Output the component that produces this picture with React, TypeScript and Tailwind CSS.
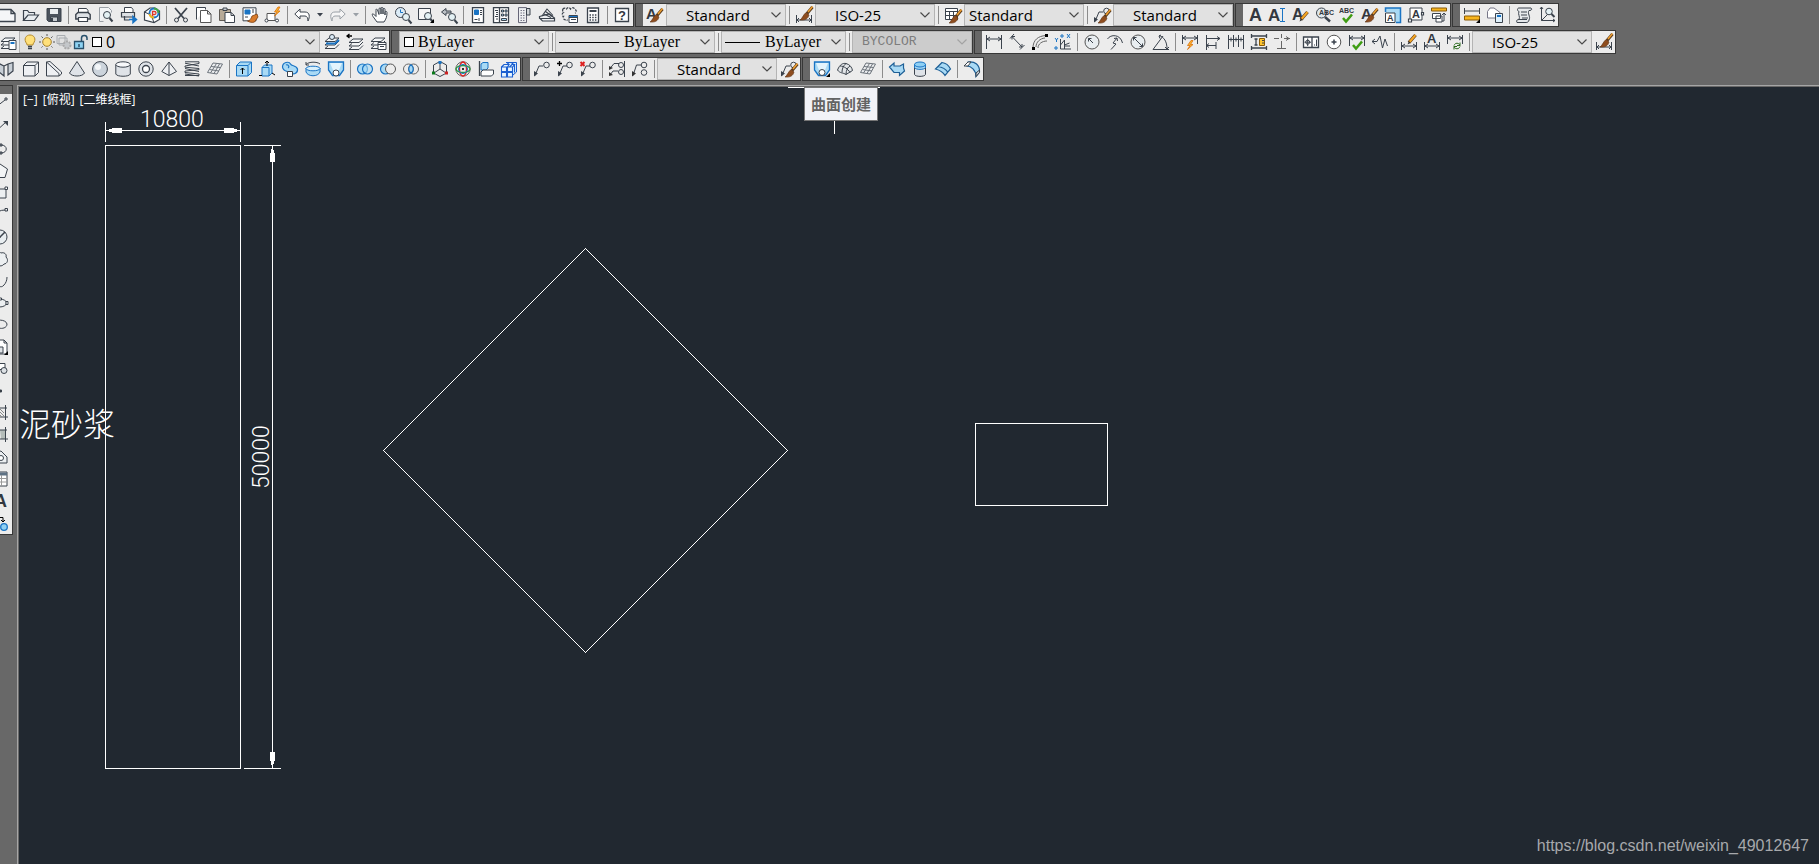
// App.tsx
// ─────────────────────────────────────────────
// CAD drawing window: docked toolbars on top,
// draw palette on the left, model space below.
// A toolbar is a string of icon names, "|" is a
// separator. Icons live in ICONS (16x16 grid).
// ─────────────────────────────────────────────

import type { ReactNode } from 'react';

const BLUE = '#1a74c4';
const SKY = '#a9daf5';
const GREY = '#9aa0a6';

/* ── Shared icon parts ─────────────────────── */

const Brush = () => (
  <>
    <path d="M15.5 2 10 8.5" stroke="#5a3a1c" strokeWidth="3" />
    <path d="M15.5 1.5 11 7" stroke="#f0a030" strokeWidth="1.5" />
    <path d="M9 7.5l3 2.5c-1 4-4 5.5-9 5 2-1 3-5 6-7.5z" fill="#8f4d1e" stroke="#5b3012" strokeWidth=".6" />
  </>
);

const Pencil = () => (
  <>
    <path d="M14.5 5 8 12.5" stroke="#5a3a1c" strokeWidth="3.4" />
    <path d="M14.5 5 8.5 12" stroke="#f5a623" strokeWidth="2" />
    <path d="M8 11 6.5 14.5 9.5 13z" fill="#333" stroke="none" />
  </>
);

const Letter = ({ x = 0, y = 13, size = 15, children = 'A' }: { x?: number; y?: number; size?: number; children?: string }) => (
  <text x={x} y={y} fontSize={size} fontWeight="700" fontFamily="Liberation Sans, sans-serif" fill="#33383f" stroke="none">
    {children}
  </text>
);

const Bolt = ({ t = '' }: { t?: string }) => (
  <path d="M13 0 9.5 5h2.5L9.5 9 15 4h-2.5L15 0z" fill="#ffb52e" stroke="#d9710c" strokeWidth=".8" transform={t} />
);

const Glass = ({ x = 10, y = 9 }: { x?: number; y?: number }) => (
  <>
    <path d={`M${x + 2.5} ${y + 3}l3 3.5`} stroke="#3b434d" strokeWidth="2" />
    <circle cx={x} cy={y} r="3.5" fill="#e4f1f4" />
  </>
);

// dimension line with end ticks, reused by most of the dimension icons
const Dim = ({ y = 5, top = 1, bottom = 15 }: { y?: number; top?: number; bottom?: number }) => (
  <path d={`M.5 ${top}V${bottom}M15.5 ${top}V${bottom}M1 ${y}H15M4 ${y - 2}L1 ${y}l3 2M12 ${y - 2}L15 ${y}l-3 2`} />
);

const Leader = ({ x = 0 }: { x?: number }) => (
  <>
    <path d={`M${1 + x} 14.5 ${5 + x} 5h4`} />
    <path d={`M${x} 10v5.5l4-3z`} fill="#3b434d" stroke="none" />
    <circle cx="12.5" cy="4" r="2.8" />
  </>
);

const Layers = () => (
  <path d="M5 4h10l-4 3.5H1zM4 8.5 1 11h10l4-4M4 12l-3 2.5h10l4-4" fill="#f3f5f6" />
);

const ICONS: Record<string, ReactNode> = {
  /* standard */
  'new': <path d="M-2 2.5H11l4 4V14.5H-2M11 2.5v4h4" fill="#f5f6f8" strokeWidth="1.3" />,
  'open': <path d="M.5 13.5V3.5h4l1.5 2h5.5v2.5M.5 13.5 5 8h10.5l-4 5.5z" fill="#e8ecef" strokeWidth="1.2" />,
  'save': (
    <>
      <path d="M1 1.5h14v13H2.5L1 13z" fill="#4b535d" />
      <path d="M4 2h8v5H4z" fill="#e9edf0" stroke="none" />
      <path d="M4.5 10h7v4.5h-7z" fill="#c9ced3" />
      <path d="M6 11v3" strokeWidth="2" />
    </>
  ),
  'print': (
    <>
      <path d="M3.5 7V1.5h8l1.5 2V7" fill="#fff" />
      <path d="M.8 7.5 3 5.5h10l2.2 2V12H.8z" fill="#dde1e5" strokeWidth="1.4" />
      <path d="M3.5 10.5h9v4h-9z" fill="#fff" strokeWidth="1.2" />
    </>
  ),
  'preview': (
    <>
      <path d="M1.5 14.5V.5h9l3 3v2M1.5 14.5h4" fill="#f2f4f6" stroke={GREY} />
      <Glass x={9} y={8} />
    </>
  ),
  'publish': (
    <>
      <path d="M3.5 5V.5h7l1.5 2V5" fill="#fff" />
      <path d="M.5 5.5h13V10H.5zM3.5 9v4h5" fill="#dde1e5" strokeWidth="1.2" />
      <path d="M8 12.5h4.5M12 9.5l3.5 3-3.5 3z" stroke={BLUE} fill={BLUE} strokeWidth="1.5" />
    </>
  ),
  'print-3d': (
    <>
      <path d="M.5 5 6 1h5l4.5 3v8.500L10 15.500.5 13z" fill="#fff" strokeWidth="1.2" />
      <path d="M.5 5 7 8l3 7.500" />
      <circle cx="10" cy="6" r="4.5" stroke={BLUE} strokeWidth="1.8" fill="#e9f6ff" />
      <path d="M10 1.5a4.500 4.500 0 0 1 4.5 4.5" stroke="#46a546" strokeWidth="2" />
      <path d="M8.5 9V4.5h2a1.500 1.500 0 0 1 0 3H9" stroke="#e0392b" strokeWidth="1.3" />
      <path d="M5.500 7a4.500 4.500 0 0 0 4.500 3.500" stroke="#f1b21c" strokeWidth="2" />
    </>
  ),
  'cut': (
    <>
      <path d="M2 1 11 11.5M14 1 5 11.5" strokeWidth="1.8" />
      <circle cx="3.5" cy="13" r="2" />
      <circle cx="12.5" cy="13" r="2" />
    </>
  ),
  'copy': (
    <>
      <path d="M.5 12.5V.5h9v2" fill="#fff" />
      <path d="M4.5 3.5h7l3.5 3.5v8.5H4.5zM11.5 3.5V7H15" fill="#fff" stroke="#555" />
    </>
  ),
  'paste': (
    <>
      <path d="M.5 2.5h11v11H.5z" fill="#b8ab98" stroke="#5f5a54" />
      <path d="M4 1h4v2.5H4z" fill="#c9ced3" />
      <path d="M6 5.500h6l3.5 3v7H6zM12 5.5v3h3" fill="#fff" />
    </>
  ),
  'match-properties': (
    <>
      <path d="M1 .8h13v13H1z" fill="#fff" />
      <path d="M3 3h5v4H3z" fill={BLUE} stroke={BLUE} />
      <path d="M10 3h2M10 5h2M3 10h3" />
      <path d="M10 9 15 7l1 3-3.5 5c-2 .8-5 .3-7-1 2 0 3.500-2 4.500-5z" fill="#d77a2a" stroke="#7b3f12" strokeWidth=".8" />
    </>
  ),
  'block-editor': (
    <>
      <path d="M2 6.5h8v7H2z" fill="#fff" stroke="#555" />
      <circle cx="1.5" cy="13.5" r="1.5" fill="#fff" />
      <circle cx="12" cy="13.5" r="1.5" fill="#fff" />
      <Bolt />
    </>
  ),
  'undo': <path d="M.8 7 6 2v3h5c5 0 5 5 3 9 0-3-1-5-3-5H6v3z" fill="#fff" />,
  'redo': <path d="M15.2 7 10 2v3H5C0 5 0 10 2 14c0-3 1-5 3-5h5v3z" fill="#f6f6f6" stroke={GREY} />,
  'pan': (
    <path
      d="M4 9.5 1.5 7C0 6 0 8 1 9.5L5 15h7c2-3 3-5 3-9.5 0-1.5-2-1.5-2 0V8 2.5c0-1.5-2-1.5-2 0V7 1.5c0-1.5-2-1.5-2 0V7 2c0-1.500-2-1.500-2 0v5.5L5.5 3c-.5-1.5-2-1-1.5.5z"
      fill="#fff"
    />
  ),
  'zoom-realtime': (
    <>
      <circle cx="5.5" cy="5.5" r="5" fill="#dcecf7" />
      <path d="M5.5 2.5v3H8" stroke={BLUE} />
      <Glass x={11} y={10} />
    </>
  ),
  'zoom-window': (
    <>
      <path d="M.5 1.5h12v11H.5z" fill="#f6f6f6" />
      <Glass x={10} y={9} />
      <path d="M16 12v4h-4z" fill="#000" stroke="none" />
    </>
  ),
  'zoom-previous': (
    <>
      <path d="M.5 5 5 1.5V4h5v2H5v2.5z" fill="#bcc1c6" />
      <Glass x={11} y={10} />
    </>
  ),
  'properties': (
    <>
      <path d="M2.500.6h11v15h-11z" fill="#fff" strokeWidth="1.3" />
      <path d="M4.500 3h4v4.500h-4z" fill={BLUE} stroke={BLUE} />
      <path d="M10 3.5h2M10 5.5h2M10 7.5h2M4.500 12.5h3M9 14v-3" />
    </>
  ),
  'design-center': (
    <>
      <path d="M.5.6h15v15H.5zM6.5 1v14" fill="#fff" strokeWidth="1.3" />
      <path d="M2 3.5h3M3 5.5h2M3 7.5h2M2 9.5h3M3 12h2" />
      <path d="M8.5 3h2v2h-2zM12 3h2v2h-2zM8.5 7h2v2h-2zM12 7h2v2h-2zM8.5 11.5h5v2h-5z" fill={SKY} />
    </>
  ),
  'tool-palettes': (
    <>
      <path d="M2.5.6h8v15h-8z" fill="#eceef0" stroke="#667" />
      <path d="M10.5 1.5h3.5V8h-3.5z" fill="#d0d4d8" />
      <path d="M4.5 3.5h4M4.5 6h4M4.5 8.5h4M4.5 11h4M4.5 13.5h4" strokeDasharray="1.5 1" strokeWidth="1.2" stroke="#778" />
    </>
  ),
  'sheet-set': (
    <>
      <path d="M.5 9.500 10 7l5.500 4v3H3.500L.5 11z" fill="#eceef0" strokeWidth="1.2" />
      <path d="M3 9 8 2l6 6.500M5 7l7 3.500M.5 11.500h15M6.500 4.500l7 5" strokeWidth="1.1" />
    </>
  ),
  'markup': (
    <>
      <path d="M1 2c1.5-2 3 0 3.5 0 1-2 3-2 4 0 1.5-2 4-1.5 4 .5 2 0 2.5 3 .5 3.5M1 2c-1 1 0 3 .5 3.5-2 1-1.5 4 0 4-1 2 1 4 3 3l1 1" strokeDasharray="2.5 1.2" strokeWidth="1.3" />
      <path d="M7 8.5h8.5v7H7zM7 10.5h8.5M9 12.5h5" fill="#fff" />
      <path d="M7 9.5h8.5" stroke={BLUE} />
    </>
  ),
  'calculator': (
    <>
      <path d="M2.5 1h11v14.5h-11z" fill="#fff" strokeWidth="1.3" />
      <path d="M4.5 4h7" strokeWidth="2" />
      <path d="M4.5 8h7M4.5 10.5h7M4.5 13h7" strokeDasharray="1.5 1.2" strokeWidth="1.5" />
    </>
  ),
  'help': (
    <>
      <path d="M1.5 1.5h13v13h-13z" fill="#fff" strokeWidth="1.3" />
      <Letter x={4} y={13} size={13}>?</Letter>
    </>
  ),

  /* styles */
  'text-style': <><Letter x={-1} y={12} size={15} /><Brush /></>,
  'dim-style': <><path d="M.5 8v8M15.5 8v8M1 13h14M3 11l-2 2 2 2M13 11l2 2-2 2" /><g transform="translate(1 -2)"><Brush /></g></>,
  'table-style': <><path d="M.5 1.500h12v11H.5zM.5 4.5h12M.5 8.5h12M4.5 4v8M8.5 4v8" fill="#fff" /><g transform="translate(1 1)"><Brush /></g></>,
  'mleader-style': <><Leader /><g transform="translate(1 1)"><Brush /></g></>,

  /* text */
  'mtext': <Letter x={2} y={14} size={18} />,
  'single-text': <><Letter x={-2} y={14} size={17} /><path d="M10 1.500h5M10 14.500h5M12.5 1.500v13" stroke={BLUE} /></>,
  'edit-text': <><Letter x={-1} y={13} size={16} /><Pencil /></>,
  'find-text': (
    <>
      <path d="m9 10 5 4.5" strokeWidth="2.5" />
      <circle cx="5.5" cy="6" r="5" fill="#dfe7ea" />
      <Letter x={3} y={8} size={7}>ABC</Letter>
    </>
  ),
  'spell-check': <><Letter x={0} y={6} size={7}>ABC</Letter><path d="m4 11 3 3.5 6-7" stroke="#3f9d13" strokeWidth="2.5" /></>,
  'scale-text': (
    <>
      <path d="M.5 5V1h15v14.5H11" fill={SKY} stroke={BLUE} strokeWidth="1.5" />
      <path d="M.5 6h9.5v9.5H.5z" fill="#fff" />
      <Letter x={2} y={14} size={9} />
    </>
  ),
  'justify-text': (
    <>
      <path d="M2 1h12v12H2z" fill="#fff" />
      <Letter x={4} y={11} size={11} />
      <path d="M.5 12h3v3h-3zM13.500 5.500h2v2.500h-2z" fill="#fff" strokeWidth="1.2" />
    </>
  ),
  'convert-space': (
    <>
      <path d="M.5 1h15v3H.5z" fill="#f7b51e" stroke="#8a5a06" />
      <path d="M1.5 6.5h8v5h-8zM5 9h6v6H5zM13 6v8h-2M13 6l-2 2M13 6l2 2" fill="#fff" />
    </>
  ),

  /* measure */
  'distance': (
    <>
      <path d="M.5 1v6M15.5 1v6M1 4h14" />
      <path d="M.5 9h15v4H.5z" fill="#f7b51e" stroke="#8a5a06" />
      <path d="M16 12v4h-4z" fill="#000" stroke="none" />
    </>
  ),
  'mass-properties': (
    <>
      <path d="M.5 4.5 3 1h4l6 4.500v5.500H.5z" fill="#fff" stroke="#778" />
      <path d="M8.500 6.5h7v9h-7z" fill="#dff0fb" />
      <path d="M10 9h4" stroke={BLUE} strokeWidth="2" />
    </>
  ),
  'list': <path d="M3 1h12c1 1 1 2-1 2.5h-1c-2 3 2 6 0 9.5 0 2-2 2.5-3 2.5H1c-1-2 0-3 2-3 1.5-3-1.5-5 0-8C1 4 1 1 3 1zM5 5h6M5 8h6M6 11h6M3 12.5h8" fill="#e6e9ec" />,
  'locate-point': <><path d="M2.5 0v13.5H16M1 2l1.500-2L4 2M14 12l2 1.500-2 1.500M2.5 13.5 9 7" /><circle cx="10" cy="4.500" r="3.3" fill="#e4f1f4" /><path d="m12.500 7 3 3" strokeWidth="2" /></>,

  /* layers */
  'layer-properties': <><Layers /><path d="M9 6.5h7v9H9z" fill="#fff" /><path d="M10.5 9h4" stroke={BLUE} strokeWidth="2" /></>,
  'make-current': <><Layers /><circle cx="8" cy="3" r="2.5" fill="#dcecf7" /><path d="M2 9.500h9l4-3.500" stroke={BLUE} strokeWidth="2" /></>,
  'layer-previous': <><g transform="translate(1 1)"><Layers /></g><path d="M5 2H0M2.5 0 0 2l2.5 2" stroke="#000" strokeWidth="1.3" /></>,
  'layer-states': <><Layers /><path d="M8 8.5h8v7H8zM8 10.5h8M10 12.5h4" fill="#fff" /></>,
  'bulb': <><path d="M5 10C1 5 4 1 8 1s7 4 3 9v1H5z" fill="#ffe07a" stroke="#b58a2a" /><path d="M6 12.5h4M6 14.5h4" strokeWidth="1.5" /></>,
  'sun': <><path d="M8 0v16M0 8h16M2.5 2.5l11 11M13.5 2.5l-11 11" stroke="#555" strokeDasharray="2 12" /><circle cx="8" cy="8" r="4.3" fill="#ffe07a" stroke="#a8822a" /></>,
  'viewport-freeze': <><path d="M1 1.500h8v8H1zM3 4h8v7H3z" stroke="#a8acb0" /><circle cx="11" cy="11" r="3.5" fill="#c4c7ca" stroke="#aaa" strokeDasharray="2 1" strokeWidth="2" /></>,
  'lock': <><path d="M1.5 7.5h9v7h-9z" fill="#8dd2f2" stroke="#28506b" strokeWidth="1.3" /><path d="M8.5 7V4c0-3.5 5.5-3.500 5.500 0v2M6 10v3" stroke="#28506b" strokeWidth="1.5" /></>,

  /* dimensions */
  'linear': <Dim y={5} />,
  'aligned': <path d="M1 4.5 5 0M11 15.5l4.5-4.5M3 2.5 13 13M3 5.5v-3h3M13 10v3h-3" />,
  'arc-length': (
    <>
      <path d="M1 14C1 6 6 2 14 1.500M6 14c0-4 4-7 9-7M4 13C4 8 8 4.5 13 4" stroke="#666" />
      <path d="M0 13h3v3H0zM13 0h3v3h-3z" fill="#000" stroke="none" />
    </>
  ),
  'ordinate': (
    <>
      <path d="M5.5 5v10H16M5.5 11l4-5v5l5-2M9.5 6v9M9.5 12H15" />
      <path d="m0 4 1.5 2L3 4M1.5 6v2M12 0l3 4M15 0l-3 4M6 1h2v2H6zM0 13h2v2H0z" stroke={BLUE} />
    </>
  ),
  'radius': <><circle cx="8" cy="8" r="7" fill="#e8edf0" stroke="#555" /><path d="M9 9 4.5 4.5M4.5 7.5v-3h3" /></>,
  'jogged': <path d="M.5 5c3-5 13-5 15 4M4 15.5 9 10l-3-1 4-5M7 4.5 10 4l.5 3" />,
  'diameter': <><circle cx="8" cy="8" r="7" fill="#e8edf0" stroke="#555" /><path d="m3.5 3.5 9 9M3.5 6.5v-3h3M12.5 9.5v3h-3" /></>,
  'angular': <path d="M0 15.5h16M0 15.500 10 2M6 1.500c5 1.5 8 6 8 13.5M8 1 6 2l1 2.5M12 13l2 2 2-2" />,
  'quick-dim': <><Dim y={4} bottom={10} /><Bolt t="translate(-4 6.500)" /></>,
  'baseline': <path d="M1.5 1v15M1.5 4.500H15M12 2.5l3 2-3 2M1.5 11.500H11M11 8v7M4 9.500l-2.5 2 2.5 2" />,
  'continue': <path d="M.5 1v14M5.5 1v12M10.5 1v12M15.5 1v14M0 5.500h16M3 3.500v4M8 3.500v4M13 3.500v4" />,
  'dim-space': (
    <>
      <path d="M.5 0v4M15.5 0v4M.5 12v4M15.5 12v4M0 2h16M0 14h16M5 5v6M3.5 5h3M3.5 11h3" strokeWidth="1.3" />
      <path d="M8.5 4.5h5v7h-5z" fill="#ffc52e" stroke="#8a5a06" />
      <path d="M11 6.5h2M11 9h2" />
    </>
  ),
  'dim-break': <path d="M7.5 0v4M7.5 7v8M3 14.5h9M0 4.5h5M10 4.5h6M12 2.5l3 2-3 2" stroke="#666" />,
  'tolerance': (
    <>
      <path d="M.5 3h15v10.5H.5zM9 3v10.5" fill="#fff" strokeWidth="1.3" />
      <circle cx="4.7" cy="8.2" r="2" />
      <path d="M4.7 4.5v7.5M1.5 8.2H8M11 11h1M13.5 5.500V12" />
    </>
  ),
  'center-mark': <><circle cx="8" cy="8" r="6.8" fill="#fff" stroke="#555" /><path d="M8 5.5v5M5.5 8h5" strokeWidth="1.5" /></>,
  'inspection': <><Dim y={4} bottom={12} /><path d="m4 11 3 3.5 6-7" stroke="#3f9d13" strokeWidth="2.5" /></>,
  'jogged-linear': <path d="M0 7.500h5L8 2l2.5 12L13 5l2.5 7M3 5 0 7.5 3 10" />,
  'dim-edit': <><Dim y={12} top={8} bottom={16} /><g transform="translate(0 -4)"><Pencil /></g></>,
  'dim-text-edit': <><Dim y={12} top={8} bottom={16} /><Letter x={3} y={9} size={13} /></>,
  'dim-update': <><Dim y={4} bottom={10} /><path d="M7 11.5c1-3 5-3 6 0M13 12.5c-1 3-5 3-6 0M13 8.5v3h-3M7 15.5v-3h3" stroke="#2a6b1c" /></>,

  /* modeling */
  'polysolid': <path d="M-1 2.500 4 5v10l-5-4zM4 5l4-2 5-1.500v8.500l-5 4V3" fill="#c8cfd6" strokeWidth="1.2" />,
  'box': <path d="M.5 4.5 4 1h11.5v10.5L12 15H.5zM.5 4.5H12V15M12 4.5 15.500 1" fill="#eef0f3" />,
  'wedge': <path d="M.5 1 4 .5 15.5 11v2L13 15H.5zM.5 1 13 12.5V15" fill="#eef0f3" />,
  'cone': <path d="M8 .5 15.5 12c-2 4-13 4-15 0z" fill="#dfe3e8" />,
  'sphere': <><circle cx="8" cy="8" r="7.4" fill="#ccd4dc" /><circle cx="6" cy="6" r="3" fill="#f4f7f9" stroke="none" /></>,
  'cylinder': <><path d="M.8 3.500v9.500c1 3 13.5 3 14.5 0V3.500" fill="#dfe3e8" /><ellipse cx="8" cy="3.5" rx="7.2" ry="2.7" fill="#f7f8fa" /></>,
  'torus': <><circle cx="8" cy="8" r="7.2" fill="#dfe3e8" /><circle cx="8" cy="8" r="3.500" fill="#fff" strokeWidth="1.3" /></>,
  'pyramid': <path d="M8 1 .8 10.5 8 14.5l7.5-4zM8 1v13.5" fill="#eef0f3" />,
  'helix': <path d="M1 .8h14v1.700L1 5v1.200l14 1.300v1.200L1 10v1.500L15 13v1.500H1M1 2.200 15 5M1 7.500 15 10.500M1 13l14 2" strokeWidth="1" />,
  'mesh': <path d="M.5 11.5 6 2l9.5 1-5.5 10zM2.5 8.5 12 10M4 5.5l9.5 1M3.5 12l6-9.500M7 12.5 12.500 3" fill="#eceef0" stroke="#6d747c" />,
  'extrude': <><path d="M.5 4.5 4 1h11.5v10.5L12 15H.5zM.5 4.5H12V15M12 4.5 15.500 1" fill={SKY} stroke={BLUE} /><path d="M6.5 13V7M4.5 9l2-2 2 2" stroke="#000" /></>,
  'presspull': <><path d="M3 6.5 5.5 4H13v8l-3 3H3zM3 6.5h7V15" fill={SKY} stroke={BLUE} /><path d="M8 5V0M6 2l2-2 2 2M0 14.5h3M13 12l3 2" stroke="#000" /></>,
  'sweep': <><path d="M.5 6C.5 1 7 0 8.500 3c1 2.500 6 1 7 5 .5 4-3.500 6-6.500 4-3-2-8-1-8.500-6zM4 4c2-1 4 2 2 3" fill={SKY} stroke={BLUE} strokeWidth="1.2" /><path d="M5.500 10.500h5v5h-5z" fill="#fff" /></>,
  'revolve': <><path d="M1 7v4c2 5 12 5 14 0V7" fill={SKY} stroke={BLUE} /><ellipse cx="8" cy="7.500" rx="7" ry="2.3" fill="#d9f0fc" stroke={BLUE} /><path d="M1 3.5c3-3 11-3 14-.5M1 1v3h3" /></>,
  'loft': <><path d="M.5 1h15v8l-4 5.500h-7L.5 9z" fill={SKY} stroke={BLUE} strokeWidth="1.3" /><path d="M2 2h12l-3 7H5z" fill="#e3f4fd" stroke="none" /><circle cx="8" cy="12" r="3" fill="#fff" /></>,
  'union': <><circle cx="5.5" cy="8" r="5" fill={SKY} stroke={BLUE} strokeWidth="1.2" /><circle cx="10.5" cy="8" r="5" fill={SKY} fillOpacity=".6" stroke={BLUE} strokeWidth="1.2" /></>,
  'subtract': <><circle cx="5.5" cy="8" r="5" fill={SKY} stroke={BLUE} strokeWidth="1.2" /><circle cx="10.5" cy="8" r="5" fill="#ececec" stroke="#555" /></>,
  'intersect': <><circle cx="5.5" cy="8" r="5" stroke="#666" /><circle cx="10.5" cy="8" r="5" stroke="#666" /><path d="M8 3.8c3 2 3 6.5 0 8.5-3-2-3-6.500 0-8.500z" fill={SKY} stroke={BLUE} strokeWidth="1.2" /></>,
  'move-3d': (
    <>
      <path d="M8 .5 14.5 4v8L8 15.5 1.5 12V4zM8 2v6L2 12M8 8l6 4" />
      <path d="M6.5 0h3v3h-3z" fill={BLUE} stroke="none" />
      <path d="M0 10.5h3v3H0z" fill="#0a7a1a" stroke="none" />
      <path d="M13 10.5h3v3h-3z" fill="#c22" stroke="none" />
    </>
  ),
  'rotate-3d': (
    <>
      <circle cx="8" cy="8" r="7.2" stroke="#666" />
      <ellipse cx="8" cy="8" rx="3.5" ry="7" stroke="#d22" strokeWidth="1.3" />
      <ellipse cx="8" cy="8" rx="7" ry="3.5" stroke="#2b9a3a" strokeWidth="1.3" />
      <circle cx="8" cy="8" r="4.5" stroke={BLUE} />
      <path d="M7 7h2v2H7z" fill="#333" stroke="none" />
    </>
  ),
  'align-3d': <><path d="M1.5 0v15" strokeWidth="1.3" /><path d="M3 3 5 1.5h5V7L8 9H3z" fill={SKY} stroke={BLUE} /><path d="M3 11l2-2h10.500v4l-2 2H3z" fill="#fff" /></>,
  'array-3d': (
    <>
      <path d="M5 1.500h10.500V11L12 14" fill="#d9efff" stroke="#1b5fd0" />
      <path d="M.5 6h5v4.500h-5zM6.500 6h5v4.500h-5zM.5 11.500h5V16h-5zM6.500 11.500h5V16h-5zM.5 6 3 3.500h5L6.500 6M6 3.500 8 1.500M8.500 6 11 3.500h2.500L11.500 6M13.500 3.500v8M10.500 3.500l2-2" fill="#e9f6ff" stroke="#1b5fd0" strokeWidth="1.1" />
    </>
  ),

  /* multileader */
  'mleader': <Leader />,
  'add-leader': <><Leader x={1} /><path d="M0 2.500h5M2.5 0v5" stroke="#000" strokeWidth="1.3" /></>,
  'remove-leader': <><Leader x={1} /><path d="m.5 1 4 4M4.5 1l-4 4" stroke="#d22" strokeWidth="2" /></>,
  'align-leader': <><path d="M1 7.5 5 2.5h5M1 14l3-4h5M15.500 0v16" /><path d="M0 5v4l4-2zM0 11v4l4-1z" fill="#333" stroke="none" /><circle cx="12" cy="4" r="2.5" /><circle cx="12" cy="11" r="2.5" /></>,
  'collect-leader': <><path d="M1 14.5 4.5 4H9" /><path d="M0 10v5.5l4-3z" fill="#333" stroke="none" /><circle cx="12" cy="4" r="2.8" /><circle cx="12" cy="11.5" r="2.8" /></>,

  /* surfaces */
  'surface-create': <><path d="M.5 1h15v8l-4 5.500h-7L.5 9z" fill={SKY} stroke={BLUE} strokeWidth="1.3" /><path d="M2 2h12l-3 7H5z" fill="#e3f4fd" stroke="none" /><circle cx="8" cy="11.5" r="3" fill="#fff" /><path d="M16 12v4h-4z" fill="#000" stroke="none" /></>,
  'surface-network': <path d="M.5 9C3 3 6 2 9 2.500c4 1 6 4 6.500 7L9 13.500c-3-2-6-1-8.500-4.500zM3 5c4 0 8 3 10 6.500M9 2.500C6 5 5 8 5 11.500M13 5c-2 1-4 4-4 8.500" fill="#e3e6e9" />,
  'surface-offset': <path d="M.5 6 5 2v3h6l3.500-2v4l1 3-5 4.500v-3H5L.5 6z" fill={SKY} stroke="#1d5f96" strokeWidth="1.2" />,
  'surface-patch': <><path d="M2.5 3.5v10c1 2.500 10 2.500 11 0v-10" fill="#dfe3e8" /><path d="M2.5 3.5v3c1 2.500 10 2.500 11 0v-3z" fill={SKY} stroke={BLUE} /><ellipse cx="8" cy="3.5" rx="5.5" ry="2.5" fill="#8fd0f4" stroke={BLUE} /></>,
  'surface-extend': <path d="M.5 8 7 1.5C11 2 14 5 15.5 8L10 14.5C8 11 4 9 .5 8zM3 5.5c4 .5 8 3 10 6" fill={SKY} stroke="#1d5f96" strokeWidth="1.2" />,
  'surface-fillet': (
    <>
      <path d="M4 1c7-1 12 3 11.500 10L12 15.5C12 9 7 5 3 5z" fill={SKY} stroke="#1d5f96" strokeWidth="1.2" />
      <path d="M0 5 4 1h3L4 5z" fill="#fff" />
      <path d="M12 15.500V12l3.500-3v2.500z" fill="#c8cfd6" />
    </>
  ),

  /* draw */
  'line': <><path d="m0 13 13-10" /><path d="M13 1h2v2h-2z" /></>,
  'construction-line': <><path d="M2 14 14 3" /><path d="M11 2h5v5z" fill="#3b434d" stroke="none" /></>,
  'polyline': <path d="M0 4h9c7 0 7 8 0 8H0M8 3h2v2H8zM8 11h2v2H8z" />,
  'polygon': <path d="M8 1 15.5 6 13 14.5H3L.5 6z" fill="#f3f5f6" />,
  'rectangle': <><path d="M0 4h14v9H0z" fill="#eceff1" /><path d="M13 2h2.5v2.5H13z" fill="#fff" /></>,
  'arc': <><path d="M2 8c3-3 6-5 11-5" /><path d="M13 1.500h2.5V4H13z" /></>,
  'circle': <><circle cx="8" cy="8" r="7" fill="#e8edf0" /><path d="M8 8 13 3M7 8h2" strokeWidth="1.5" /></>,
  'revision-cloud': <path d="M4 2c3-2 5 0 5 0 3-1 6 1 5 4 3 3 1 7-2 7-2 3-6 2-8 0" fill="#eceff1" />,
  'spline': <path d="M2 4c2 9 7 12 10 8 2-2 3-5 3-8" />,
  'ellipse': <><ellipse cx="7.5" cy="8" rx="7" ry="4" fill="#eceff1" /><path d="M14 6.5h2v3h-2zM7.5 3h2v2h-2z" fill="#fff" /></>,
  'ellipse-arc': <path d="M1 6c2-4 13-4 14 1 0 4-5 5-8 4v3" />,
  'insert-block': <><path d="M4 1h8l3 3v11H4zM12 1v3h3" fill="#fff" /><path d="M5 8h6v6H5z" fill="#dde1e5" /><path d="M16 12v4h-4z" fill="#000" stroke="none" /></>,
  'make-block': <><path d="M2 2.5h11v6H2z" fill="#fff" /><circle cx="12" cy="9.5" r="3" fill="#dde1e5" /></>,
  'point': <path d="M8 7h1.5v2H8z" fill="#333" />,
  'hatch': <><path d="M0 3h15M13.5 0v15M5 12h11" /><path d="m5 4 7 7M8 4l4 4M5 7l5 5" stroke="#888" /></>,
  'gradient': <><path d="M8 3h5v9H9z" fill="#b5bdba" stroke="none" /><path d="M0 3h15M13.5 0v15M5 12h11" /></>,
  'region': <><path d="M2 4 9 2l6 6v6H2z" fill="#eceff1" /><circle cx="9" cy="9" r="2.5" fill="#fff" /></>,
  'table': <><path d="M0 1h15v14H0z" fill="#fff" /><path d="M0 3h15" strokeWidth="3" stroke="#5d7184" /><path d="M0 7.5h15M0 11h15M9.5 4v11" stroke="#999" /></>,
  'multiline-text': <Letter x={2} y={14} size={18} />,
  'add-selected': <><circle cx="12" cy="12" r="3.3" fill="#8fd0f4" stroke={BLUE} strokeWidth="1.3" /><path d="M6 2.5h5V7M9 5l2 2 2-2" stroke="#000" /></>,
};

/* ── Building blocks ───────────────────────── */

function Icon({ name }: { name: string }) {
  return (
    <svg className="size-4 shrink-0 overflow-visible" viewBox="0 0 16 16" fill="none" stroke="#3b434d" strokeWidth="1" aria-hidden="true">
      {ICONS[name]}
    </svg>
  );
}

function Tools({ items }: { items: string }) {
  return (
    <>
      {items.split(' ').map((name, i) => {
        if (name === '|') {
          return <div key={i} className="flex w-1.5 shrink-0 justify-center"><span className="my-0.5 w-px bg-[#8c8c8c]" /></div>;
        }
        if (name === 'undo-list' || name === 'redo-list') {
          return (
            <button key={i} type="button" aria-label={name} className="flex w-[13px] shrink-0 items-center justify-center">
              <svg className="h-1 w-1.5" viewBox="0 0 6 4" aria-hidden="true"><path d="M0 0h6L3 3.5z" fill={name === 'redo-list' ? GREY : '#3b434d'} /></svg>
            </button>
          );
        }
        return (
          <button key={i} type="button" aria-label={name} className="flex w-[23px] shrink-0 items-center justify-center hover:bg-sky-100">
            <Icon name={name} />
          </button>
        );
      })}
    </>
  );
}

// Toolbar with a drag handle; the first one of a row is docked past the window edge.
function Group({ label, first = false, children }: { label: string; first?: boolean; children: ReactNode }) {
  return (
    <div role="toolbar" aria-label={label} className="flex h-6 shrink-0">
      {!first && <div className="ml-px w-2 border-l border-y border-[#383838] bg-[#686868]" />}
      <div className={`flex border-y border-r border-[#383838] bg-[#ececec] ${first ? '-ml-1' : ''}`}>{children}</div>
    </div>
  );
}

type ComboProps = {
  label: string;
  value: string;
  width: string;
  text?: string;
  disabled?: boolean;
  children?: ReactNode;
};

function Combo({ label, value, width, text = 'pl-[19px] font-["Open_Sans"] text-[15px]', disabled = false, children }: ComboProps) {
  return (
    <div className={`relative flex shrink-0 ${width}`}>
      <select
        aria-label={label}
        disabled={disabled}
        className={`w-full appearance-none border border-[#b4b4b4] leading-5 ${disabled ? 'bg-[#cccccc] text-[#7d7d7d] opacity-100' : 'bg-[#e1e1e1] text-black'} ${text}`}
      >
        <option>{value}</option>
      </select>
      {children && <div className="pointer-events-none absolute inset-y-0 left-0 flex items-center">{children}</div>}
      <svg className="pointer-events-none absolute top-2 right-[5px] h-1.5 w-2.5" viewBox="0 0 10 6" fill="none" stroke={disabled ? '#a3a3a3' : '#4a4a4a'} strokeWidth="1.2" aria-hidden="true">
        <path d="m.5.5 4.5 4.5L9.5.5" />
      </svg>
    </div>
  );
}

const SERIF = 'font-["Liberation_Serif"] text-base';

/* ── Model space ───────────────────────────── */

function Drawing() {
  return (
    <svg className="absolute inset-0 size-full" fill="none" stroke="#fff" strokeWidth="1" role="img" aria-label="Model space">
      <g shapeRendering="crispEdges">
        {/* column outline */}
        <rect x="86.5" y="58.5" width="135" height="623" />
        {/* width dimension */}
        <path d="M86.5 35v20M221.5 35v20M87 43.5h134" />
        <path d="M87 43.5l7-2.500 9-.5v6l-9-.5zM221 43.5l-7-2.500-9-.5v6l9-.5z" fill="#fff" stroke="none" />
        {/* height dimension */}
        <path d="M225 58.5h37M225 681.5h37M253.5 59v622" />
        <path d="M253.5 59l-2 7-1 9h6l-1-9zM253.5 681l-2-7-1-9h6l-1 9z" fill="#fff" stroke="none" />
        <path d="M566.5 161.5l202 202-202 202-202-202z" />
        <rect x="956.5" y="336.5" width="132" height="82" />
        {/* crosshair, partly under the tooltip */}
        <path d="M769 .5h92M815.5 0v47" />
      </g>
      <g fill="#fff" stroke="none">
        <text x="121" y="40" fontFamily="Roboto, sans-serif" fontWeight="300" fontSize="23">10800</text>
        <text transform="translate(250 402) rotate(-90)" fontFamily="Roboto, sans-serif" fontWeight="300" fontSize="23">50000</text>
        <text x="0" y="349" fontFamily="Noto Sans CJK SC, sans-serif" fontWeight="300" fontSize="32">泥砂浆</text>
      </g>
    </svg>
  );
}

const DRAW_TOOLS = [
  'line', 'construction-line', 'polyline', 'polygon', 'rectangle', 'arc', 'circle', 'revision-cloud', 'spline', 'ellipse',
  'ellipse-arc', 'insert-block', 'make-block', 'point', 'hatch', 'gradient', 'region', 'table', 'multiline-text', 'add-selected',
];

export default function App() {
  return (
    <div className="flex min-h-screen flex-col overflow-hidden bg-[#686868] pt-[3px]">
      <header className="flex flex-col gap-[3px] overflow-hidden pb-1">
        <div className="flex">
          <Group label="Standard" first>
            <Tools items="new open save | print preview publish print-3d | cut copy paste match-properties block-editor | undo undo-list redo redo-list | pan zoom-realtime zoom-window zoom-previous | properties design-center tool-palettes sheet-set markup calculator | help" />
          </Group>
          <Group label="Styles">
            <Tools items="text-style" />
            <Combo label="Text style" value="Standard" width="w-[120px]" />
            <Tools items="| dim-style" />
            <Combo label="Dimension style" value="ISO-25" width="w-[120px]" />
            <Tools items="| table-style" />
            <Combo label="Table style" value="Standard" width="w-[120px]" text={'pl-1 font-["Open_Sans"] text-[15px]'} />
            <Tools items="| mleader-style" />
            <Combo label="Multileader style" value="Standard" width="w-[120px]" />
          </Group>
          <Group label="Text">
            <Tools items="mtext single-text edit-text find-text spell-check text-style scale-text justify-text convert-space" />
          </Group>
          <Group label="Inquiry">
            <Tools items="distance mass-properties | list locate-point" />
          </Group>
        </div>

        <div className="flex">
          <Group label="Layers" first>
            <Tools items="layer-properties" />
            <Combo label="Layer" value="0" width="w-[301px]" text={'pl-[86px] font-["Open_Sans"] text-base'}>
              <div className="flex items-center gap-px pl-[3px]">
                <Icon name="bulb" />
                <Icon name="sun" />
                <Icon name="viewport-freeze" />
                <Icon name="lock" />
                <span className="ml-0.5 size-2.5 border border-black bg-white" />
              </div>
            </Combo>
            <Tools items="make-current layer-previous layer-states" />
          </Group>
          <Group label="Properties">
            <Combo label="Color" value="ByLayer" width="w-[150px]" text={`pl-[18px] ${SERIF}`}>
              <span className="ml-[5px] size-2.5 border border-black bg-white" />
            </Combo>
            <Tools items="|" />
            <Combo label="Linetype" value="ByLayer" width="w-[160px]" text={`pl-[68px] ${SERIF}`}>
              <span className="ml-1 h-px w-[60px] bg-black" />
            </Combo>
            <Tools items="|" />
            <Combo label="Lineweight" value="ByLayer" width="w-[125px]" text={`pl-[43px] ${SERIF}`}>
              <span className="ml-1 h-px w-[35px] bg-black" />
            </Combo>
            <Tools items="|" />
            <Combo label="Plot style" value="BYCOLOR" width="w-[120px]" text={'pl-[9px] font-["Liberation_Mono"] text-[13px]'} disabled />
          </Group>
          <Group label="Dimension">
            <Tools items="linear aligned arc-length ordinate | radius jogged diameter angular | quick-dim baseline continue dim-space dim-break | tolerance center-mark inspection jogged-linear | dim-edit dim-text-edit dim-update |" />
            <Combo label="Current dimension style" value="ISO-25" width="w-[120px]" />
            <Tools items="dim-style" />
          </Group>
        </div>

        <div className="flex">
          <Group label="Modeling" first>
            <Tools items="polysolid box wedge cone sphere cylinder torus pyramid helix mesh | extrude presspull sweep revolve loft | union subtract intersect | move-3d rotate-3d align-3d array-3d" />
          </Group>
          <Group label="Multileader">
            <Tools items="mleader add-leader remove-leader | align-leader collect-leader |" />
            <Combo label="Current multileader style" value="Standard" width="w-[120px]" />
            <Tools items="mleader-style" />
          </Group>
          <Group label="Surface creation">
            <Tools items="surface-create surface-network mesh | surface-offset surface-patch surface-extend | surface-fillet" />
          </Group>
        </div>
      </header>

      <div className="flex flex-1 gap-1">
        <aside className="flex w-[13px] shrink-0 flex-col self-start overflow-hidden border-t border-r border-b border-[#383838] bg-[#ececec]">
          <div className="h-2 bg-[#686868]" />
          {DRAW_TOOLS.map((name) => (
            <button key={name} type="button" aria-label={name} className="-ml-2 flex h-[22px] shrink-0 items-center">
              <Icon name={name} />
            </button>
          ))}
        </aside>

        <main className="flex min-w-0 flex-1 border-t border-l border-[#a6a6a6]">
          <div className="relative flex flex-1 flex-col justify-between overflow-hidden border-t border-l border-[#686868] bg-[#212830]">
            <Drawing />
            <p className='relative flex gap-[5px] pt-px pl-1 font-["Open_Sans","Noto_Sans_CJK_SC",sans-serif] text-xs leading-6 text-white'>
              <span>[−]</span>
              <span>[俯视]</span>
              <span>[二维线框]</span>
            </p>
            <div role="tooltip" className='absolute top-0 left-[785px] border border-[#767676] bg-[#f1f2f7] px-1.5 py-1 font-["Noto_Sans_CJK_SC",sans-serif] text-[15px] leading-6 font-bold text-[#646464]'>
              曲面创建
            </div>
            <a href="https://blog.csdn.net/weixin_49012647" className='relative mr-2.5 mb-1.5 self-end font-["Liberation_Sans",sans-serif] text-base leading-6 text-[#a7a9ac]'>
              https://blog.csdn.net/weixin_49012647
            </a>
          </div>
        </main>
      </div>
    </div>
  );
}
